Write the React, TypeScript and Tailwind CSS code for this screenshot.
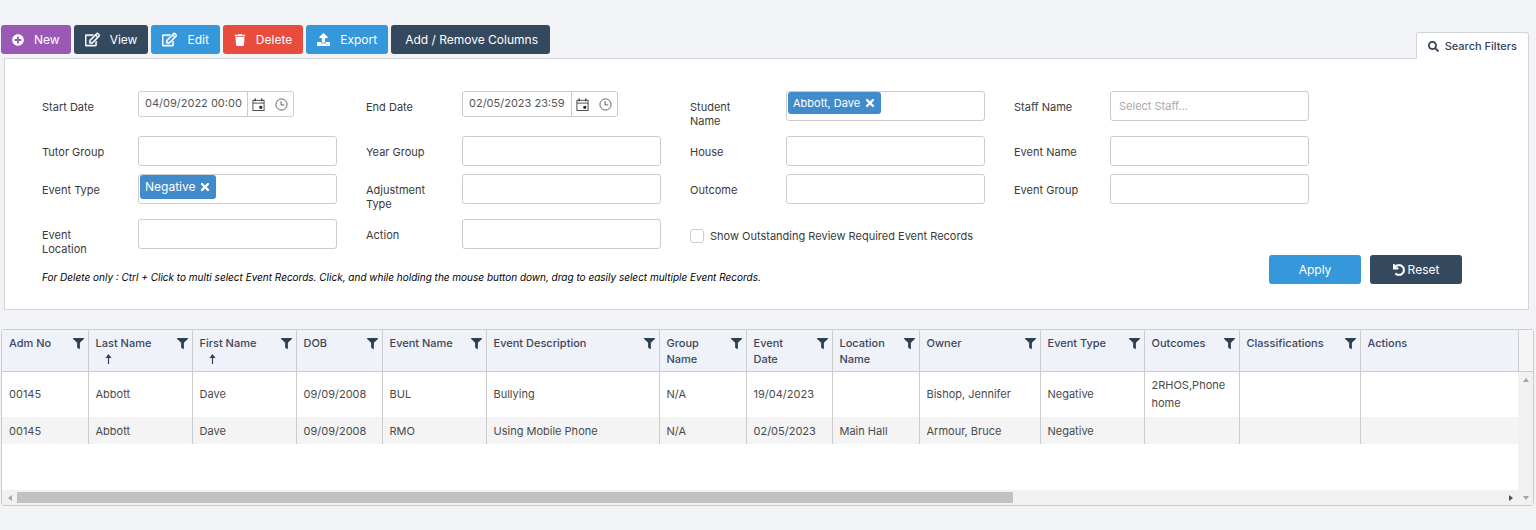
import { type ReactNode } from "react";
import {
  FaFilter,
  FaPlusCircle,
  FaRegEdit,
  FaSearch,
  FaTimes,
  FaTrash,
  FaUndo,
  FaUpload,
} from "react-icons/fa";

const toolbar = [
  { label: "New", color: "bg-[#9b59b6]", icon: <FaPlusCircle size={12} /> },
  { label: "View", color: "bg-[#34495e]", icon: <FaRegEdit size={15} stroke="white" strokeWidth={16} /> },
  { label: "Edit", color: "bg-[#3498db]", icon: <FaRegEdit size={15} stroke="white" strokeWidth={16} /> },
  { label: "Delete", color: "bg-[#e74c3c]", icon: <FaTrash size={12} /> },
  { label: "Export", color: "bg-[#3498db]", icon: <FaUpload size={13} /> },
];

const columns = [
  { name: "Adm No", width: "w-[86px]" },
  { name: "Last Name", width: "w-[104px]", sorted: true },
  { name: "First Name", width: "w-[104px]", sorted: true },
  { name: "DOB", width: "w-[86px]" },
  { name: "Event Name", width: "w-[104px]" },
  { name: "Event Description", width: "w-[173px]" },
  { name: "Group Name", width: "w-[87px]", wrap: true },
  { name: "Event Date", width: "w-[86px]", wrap: true },
  { name: "Location Name", width: "w-[87px]", wrap: true },
  { name: "Owner", width: "w-[121px]" },
  { name: "Event Type", width: "w-[104px]" },
  { name: "Outcomes", width: "w-[95px]" },
  { name: "Classifications", width: "w-[121px]" },
  { name: "Actions", width: "", noFilter: true },
];

const rows = [
  ["00145", "Abbott", "Dave", "09/09/2008", "BUL", "Bullying", "N/A", "19/04/2023", "", "Bishop, Jennifer", "Negative", "2RHOS,Phone home", "", ""],
  ["00145", "Abbott", "Dave", "09/09/2008", "RMO", "Using Mobile Phone", "N/A", "02/05/2023", "Main Hall", "Armour, Bruce", "Negative", "", "", ""],
];

const CalendarIcon = () => (
  <svg width="13" height="13" viewBox="0 0 14 14" fill="none" stroke="#444" aria-hidden="true">
    <rect x="1" y="2.5" width="12" height="11" />
    <path d="M1 5.5h12" />
    <path d="M3.5 0.5v3M10.5 0.5v3" strokeWidth="1.6" />
    <rect x="8.5" y="9" width="2" height="2" fill="#222" stroke="#222" />
  </svg>
);

const ClockIcon = () => (
  <svg width="13" height="13" viewBox="0 0 14 14" fill="none" stroke="#555" aria-hidden="true">
    <circle cx="7" cy="7" r="6" />
    <path d="M6.5 3.5v4H10" />
  </svg>
);

const SortArrow = () => (
  <svg width="7" height="10" viewBox="0 0 7 10" aria-hidden="true">
    <path d="M3.5 0L6.5 4H4.1V10H2.9V4H0.5Z" fill="#34405a" />
  </svg>
);

const Field = ({ id, label, children }: { id: string; label: string; children: ReactNode }) => (
  <div className="flex items-start">
    <label htmlFor={id} className="w-24 shrink-0 pt-[9px] pr-6 text-[11px] leading-[14px]">
      {label}
    </label>
    <div className="min-w-0 flex-1">{children}</div>
  </div>
);

type SelectBoxProps = {
  id: string;
  label: string;
  placeholder?: string;
  tag?: string;
  tagSize?: string;
};

const SelectBox = ({ id, label, placeholder, tag, tagSize = "h-[22px] text-[11px]" }: SelectBoxProps) => (
  <Field id={id} label={label}>
    <div className="flex h-[30px] items-start rounded-[3px] border border-[#ccc] bg-white">
      {tag && (
        <span className={"ml-px flex shrink-0 items-center gap-1 rounded-[3px] bg-[#428bca] px-[5px] text-white " + tagSize}>
          {tag}
          <button type="button" aria-label={"Remove " + tag} className="cursor-pointer">
            <FaTimes size={12} />
          </button>
        </span>
      )}
      <input
        id={id}
        type="text"
        placeholder={placeholder}
        className="h-full w-full min-w-0 bg-transparent px-2 text-[11px] outline-none placeholder:text-[#aaa]"
      />
    </div>
  </Field>
);

const DateBox = ({ id, label, value }: { id: string; label: string; value: string }) => (
  <Field id={id} label={label}>
    <div className="flex h-[26px] w-[156px] rounded-[3px] border border-[#ccc] bg-white">
      <input
        id={id}
        type="text"
        defaultValue={value}
        className="w-[109px] border-r border-[#ccc] pb-px pl-[6px] text-[11px] text-[#555] outline-none"
      />
      <div className="flex flex-1 items-center justify-between pr-[5px] pl-1">
        <button type="button" aria-label={label + " calendar"} className="cursor-pointer">
          <CalendarIcon />
        </button>
        <button type="button" aria-label={label + " time"} className="cursor-pointer">
          <ClockIcon />
        </button>
      </div>
    </div>
  </Field>
);

const Filters = () => (
  <section className="mx-1 mr-[7px] border border-[#d3d5d9] bg-white pt-8 pr-[66px] pb-[25px] pl-[37px]">
    <div className="mr-[153px] grid grid-cols-4 gap-x-[29px] gap-y-2">
      <DateBox id="start" label="Start Date" value="04/09/2022 00:00" />
      <DateBox id="end" label="End Date" value="02/05/2023 23:59" />
      <SelectBox id="student" label="Student Name" tag="Abbott, Dave" />
      <SelectBox id="staff" label="Staff Name" placeholder="Select Staff..." />
      <SelectBox id="tutor" label="Tutor Group" />
      <SelectBox id="year" label="Year Group" />
      <SelectBox id="house" label="House" />
      <SelectBox id="eventName" label="Event Name" />
      <SelectBox id="eventType" label="Event Type" tag="Negative" tagSize="h-[24px] text-[12px]" />
      <SelectBox id="adjustment" label="Adjustment Type" />
      <SelectBox id="outcome" label="Outcome" />
      <SelectBox id="eventGroup" label="Event Group" />
      <SelectBox id="location" label="Event Location" />
      <SelectBox id="action" label="Action" />
      <label className="col-span-2 flex h-[34px] items-center gap-[6px] text-[11px]">
        <input
          type="checkbox"
          className="size-[14px] appearance-none rounded-[3px] border border-[#ccc] bg-white checked:bg-[#428bca]"
        />
        Show Outstanding Review Required Event Records
      </label>
    </div>
    <div className="-mt-px flex items-end justify-between">
      <p className="text-[10px] leading-[14px] text-black italic">
        For Delete only : Ctrl + Click to multi select Event Records. Click, and while holding the mouse button down, drag to easily select multiple Event Records.
      </p>
      <div className="flex gap-[9px] text-[12px] text-white">
        <button type="button" className="h-[29px] w-[92px] cursor-pointer rounded-[3px] bg-[#3498db]">
          Apply
        </button>
        <button type="button" className="flex h-[29px] w-[92px] cursor-pointer items-center justify-center gap-[3px] rounded-[3px] bg-[#34495e]">
          <FaUndo size={12} stroke="white" strokeWidth={20} />
          Reset
        </button>
      </div>
    </div>
  </section>
);

const ScrollArrow = ({ d, label, color }: { d: string; label: string; color: string }) => (
  <button type="button" aria-label={label} className="flex size-[15px] shrink-0 items-center justify-center">
    <svg width="8" height="8" viewBox="0 0 8 8" className={color}>
      <path d={d} fill="currentColor" />
    </svg>
  </button>
);

const EventGrid = () => (
  <section className="mx-px mt-[19px] mr-[2px] flex rounded-[3px] border border-[#ccc] bg-white">
    <div className="flex min-w-0 flex-1 flex-col">
      <table className="w-full table-fixed border-collapse text-left text-[11px]">
        <thead>
          <tr className="h-[41px] border-b border-[#ccc] bg-[#eff3f9] text-[#3d4659]">
            {columns.map((col) => (
              <th
                key={col.name}
                scope="col"
                className={"border-l border-[#ccc] pt-[5px] pr-1 pl-[7px] align-top leading-4 font-medium first:border-l-0 " + col.width}
              >
                <div className="flex items-start justify-between">
                  <div className={col.wrap ? "w-12" : "whitespace-nowrap"}>
                    {col.name}
                    {col.sorted && (
                      <div className="flex h-4 items-center pl-[9px]">
                        <SortArrow />
                      </div>
                    )}
                  </div>
                  {!col.noFilter && (
                    <button type="button" aria-label={"Filter " + col.name} className="flex h-4 shrink-0 cursor-pointer items-center">
                      <FaFilter size={11} className="text-[#2c3e50]" />
                    </button>
                  )}
                </div>
              </th>
            ))}
          </tr>
        </thead>
        <tbody>
          {rows.map((row, i) => (
            <tr key={i} className={i === 0 ? "h-[46px]" : "h-[27px] bg-[#f4f4f4]"}>
              {row.map((cell, j) => (
                <td key={j} className="border-l border-[#ccc] pl-[7px] leading-[18px] text-[#4a4a4a] first:border-l-0">
                  {cell}
                </td>
              ))}
            </tr>
          ))}
        </tbody>
      </table>
      <div className="mt-[46px] flex h-[15px] items-center bg-[#f1f1f1]">
        <ScrollArrow d="M6 1V7L2 4Z" label="Scroll left" color="text-[#a3a3a3]" />
        <div className="flex-1">
          <div className="h-[11px] w-[67%] bg-[#c1c1c1]" />
        </div>
        <ScrollArrow d="M2 1V7L6 4Z" label="Scroll right" color="text-[#505050]" />
      </div>
    </div>
    <div className="flex w-[15px] flex-col">
      <div className="h-[42px] border-b border-l border-[#ccc] bg-[#f5f5f5]" />
      <div className="flex flex-1 flex-col justify-between bg-[#f1f1f1]">
        <ScrollArrow d="M1 6H7L4 2Z" label="Scroll up" color="text-[#a3a3a3]" />
        <ScrollArrow d="M1 2H7L4 6Z" label="Scroll down" color="text-[#a3a3a3]" />
      </div>
    </div>
  </section>
);

const App = () => {
  return (
    <div className="min-h-screen bg-[#f1f3f7] pt-[25px] font-['Inter',sans-serif] text-[#3a3a3a]">
      <div className="flex items-start justify-between pr-[7px] pl-px">
        <div className="flex gap-[3px] text-[12px] text-white">
          {toolbar.map((item) => (
            <button
              key={item.label}
              type="button"
              className={"flex h-[29px] cursor-pointer items-center gap-[10px] rounded-[3px] px-[11px] " + item.color}
            >
              {item.icon}
              {item.label}
            </button>
          ))}
          <button type="button" className="h-[29px] cursor-pointer rounded-[3px] bg-[#34495e] pr-[12px] pl-[14px]">
            Add / Remove Columns
          </button>
        </div>
        <button
          type="button"
          className="relative mt-[7px] -mb-px flex h-[27px] cursor-pointer items-center gap-[6px] rounded-t-[3px] border border-b-0 border-[#d3d5d9] bg-white px-[11px] text-[11px] font-medium text-[#34405a]"
        >
          <FaSearch size={11} />
          Search Filters
        </button>
      </div>
      <Filters />
      <EventGrid />
    </div>
  );
};

export default App;
